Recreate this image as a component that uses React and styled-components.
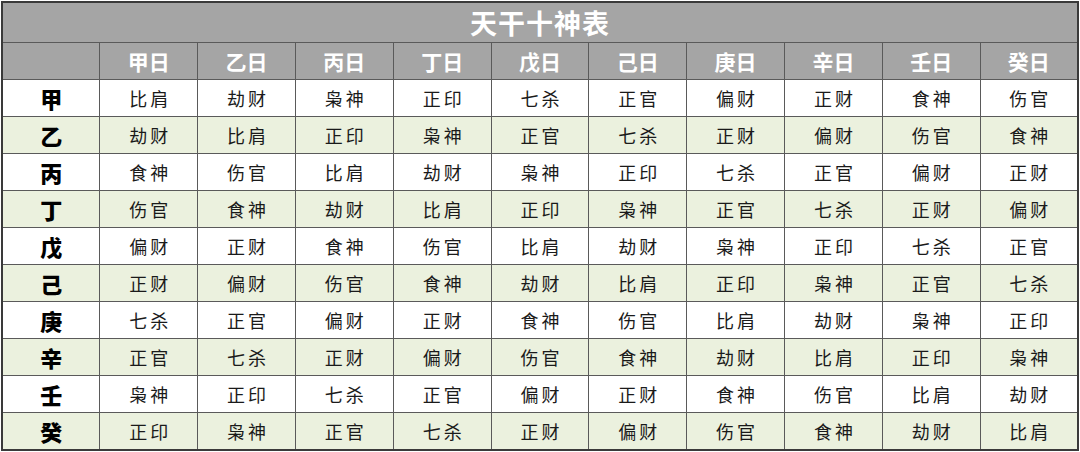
import React from "react";
import styled, { createGlobalStyle } from "styled-components";

const Global = createGlobalStyle`
  html, body { margin: 0; padding: 0; background: #ffffff; }
  body { font-family: "Noto Sans CJK SC", "Noto Sans", sans-serif; }
`;

const Page = styled.div`
  padding: 1px 0 0 1px;
`;

const Table = styled.table`
  width: 1078px;
  table-layout: fixed;
  border-collapse: collapse;
  border: 2px solid #3a3a3a;
`;

const TitleCell = styled.th`
  height: 39px;
  padding: 0;
  background: #a5a5a5;
  color: #ffffff;
  font-size: 27px;
  font-weight: 700;
  letter-spacing: 1px;
  border-bottom: 1px solid #5a5a5a;
  text-align: center;
`;

const HeadCell = styled.th`
  height: 36px;
  padding: 0;
  background: #a5a5a5;
  color: #ffffff;
  font-size: 21px;
  font-weight: 700;
  border: 1px solid #5a5a5a;
  text-align: center;
`;

const Row = styled.tr`
  background: ${(p) => (p.$alt ? "#ebf1de" : "#ffffff")};
`;

const LabelCell = styled.th`
  height: 36px;
  padding: 0;
  font-size: 22px;
  font-weight: 900;
  color: #000000;
  border: 1px solid #5a5a5a;
  text-align: center;
`;

const Cell = styled.td`
  height: 36px;
  padding: 0;
  font-size: 18px;
  letter-spacing: 3px;
  text-indent: 3px;
  color: #1a1a1a;
  border: 1px solid #5a5a5a;
  text-align: center;
`;

const stems = ["甲", "乙", "丙", "丁", "戊", "己", "庚", "辛", "壬", "癸"];

const data = [
  ["比肩", "劫财", "枭神", "正印", "七杀", "正官", "偏财", "正财", "食神", "伤官"],
  ["劫财", "比肩", "正印", "枭神", "正官", "七杀", "正财", "偏财", "伤官", "食神"],
  ["食神", "伤官", "比肩", "劫财", "枭神", "正印", "七杀", "正官", "偏财", "正财"],
  ["伤官", "食神", "劫财", "比肩", "正印", "枭神", "正官", "七杀", "正财", "偏财"],
  ["偏财", "正财", "食神", "伤官", "比肩", "劫财", "枭神", "正印", "七杀", "正官"],
  ["正财", "偏财", "伤官", "食神", "劫财", "比肩", "正印", "枭神", "正官", "七杀"],
  ["七杀", "正官", "偏财", "正财", "食神", "伤官", "比肩", "劫财", "枭神", "正印"],
  ["正官", "七杀", "正财", "偏财", "伤官", "食神", "劫财", "比肩", "正印", "枭神"],
  ["枭神", "正印", "七杀", "正官", "偏财", "正财", "食神", "伤官", "比肩", "劫财"],
  ["正印", "枭神", "正官", "七杀", "正财", "偏财", "伤官", "食神", "劫财", "比肩"],
];

export default function App() {
  return (
    <Page>
      <Global />
      <Table>
        <thead>
          <tr>
            <TitleCell colSpan={11}>天干十神表</TitleCell>
          </tr>
          <tr>
            <HeadCell />
            {stems.map((s) => (
              <HeadCell key={s}>{s}日</HeadCell>
            ))}
          </tr>
        </thead>
        <tbody>
          {data.map((row, i) => (
            <Row key={stems[i]} $alt={i % 2 === 1}>
              <LabelCell>{stems[i]}</LabelCell>
              {row.map((v, j) => (
                <Cell key={j}>{v}</Cell>
              ))}
            </Row>
          ))}
        </tbody>
      </Table>
    </Page>
  );
}
